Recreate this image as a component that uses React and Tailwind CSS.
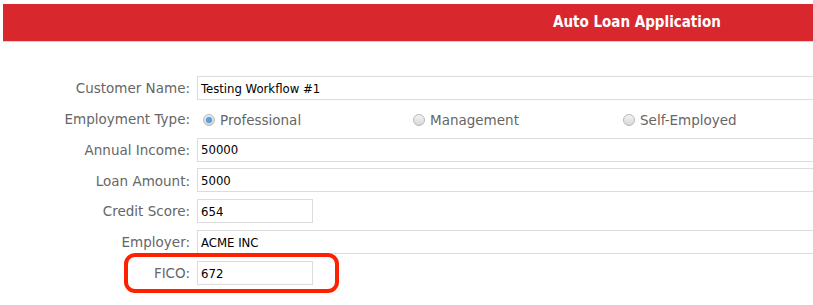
import React from "react";

const labelFont = { fontFamily: '"DejaVu Sans", Verdana, sans-serif' };
const valueFont = { fontFamily: '"DejaVu Sans Condensed", "DejaVu Sans", sans-serif' };

function Radio({ checked, label }) {
  return (
    <label className="flex items-center gap-[5px] pl-[6px] w-[210px] shrink-0 pt-[2px]">
      <span className="w-[12px] h-[12px] rounded-full border border-[#b8b8b8] bg-gradient-to-b from-[#f4f4f4] to-[#d8d8d8] flex items-center justify-center">
        {checked && <span className="w-[6px] h-[6px] rounded-full bg-[#5a9fd8] shadow-[0_0_2px_#8cc4f0]" />}
      </span>
      <span className="text-[13.5px] text-[#666]">{label}</span>
    </label>
  );
}

function Row({ label, children }) {
  return (
    <div className="flex items-center h-[24px]">
      <div className="w-[190px] shrink-0 text-right text-[13.5px] text-[#666] leading-none pt-[2px]">{label}</div>
      <div className="ml-[7px] flex items-center">{children}</div>
    </div>
  );
}

function Field({ value, short }) {
  return (
    <div
      className={`h-[24px] border border-[#dcdcdc] bg-white flex items-center px-[3px] pt-[1px] text-[13px] text-black ${
        short ? "w-[116px]" : "w-[630px]"
      }`}
      style={valueFont}
    >
      {value}
    </div>
  );
}

export default function App() {
  return (
    <div className="relative w-[813px] h-[305px] overflow-hidden bg-white" style={labelFont}>
      <div className="mt-[4px] ml-[3px] h-[38px] bg-[#d9272e] border-b border-[#d6d6d6] flex items-center pl-[550px]">
        <span className="text-white font-bold text-[15px]" style={valueFont}>
          Auto Loan Application
        </span>
      </div>

      <form className="mt-[34px] flex flex-col gap-[6.8px]">
        <Row label="Customer Name:">
          <Field value="Testing Workflow #1" />
        </Row>
        <Row label="Employment Type:">
          <div className="flex">
            <Radio checked label="Professional" />
            <Radio label="Management" />
            <Radio label="Self-Employed" />
          </div>
        </Row>
        <Row label="Annual Income:">
          <Field value="50000" />
        </Row>
        <Row label="Loan Amount:">
          <Field value="5000" />
        </Row>
        <Row label="Credit Score:">
          <Field value="654" short />
        </Row>
        <Row label="Employer:">
          <Field value="ACME INC" />
        </Row>
        <Row label="FICO:">
          <Field value="672" short />
        </Row>
      </form>

      <div className="absolute left-[124px] top-[253px] w-[215px] h-[40px] border-4 border-[#ff2000] rounded-[11px] pointer-events-none" />
    </div>
  );
}
